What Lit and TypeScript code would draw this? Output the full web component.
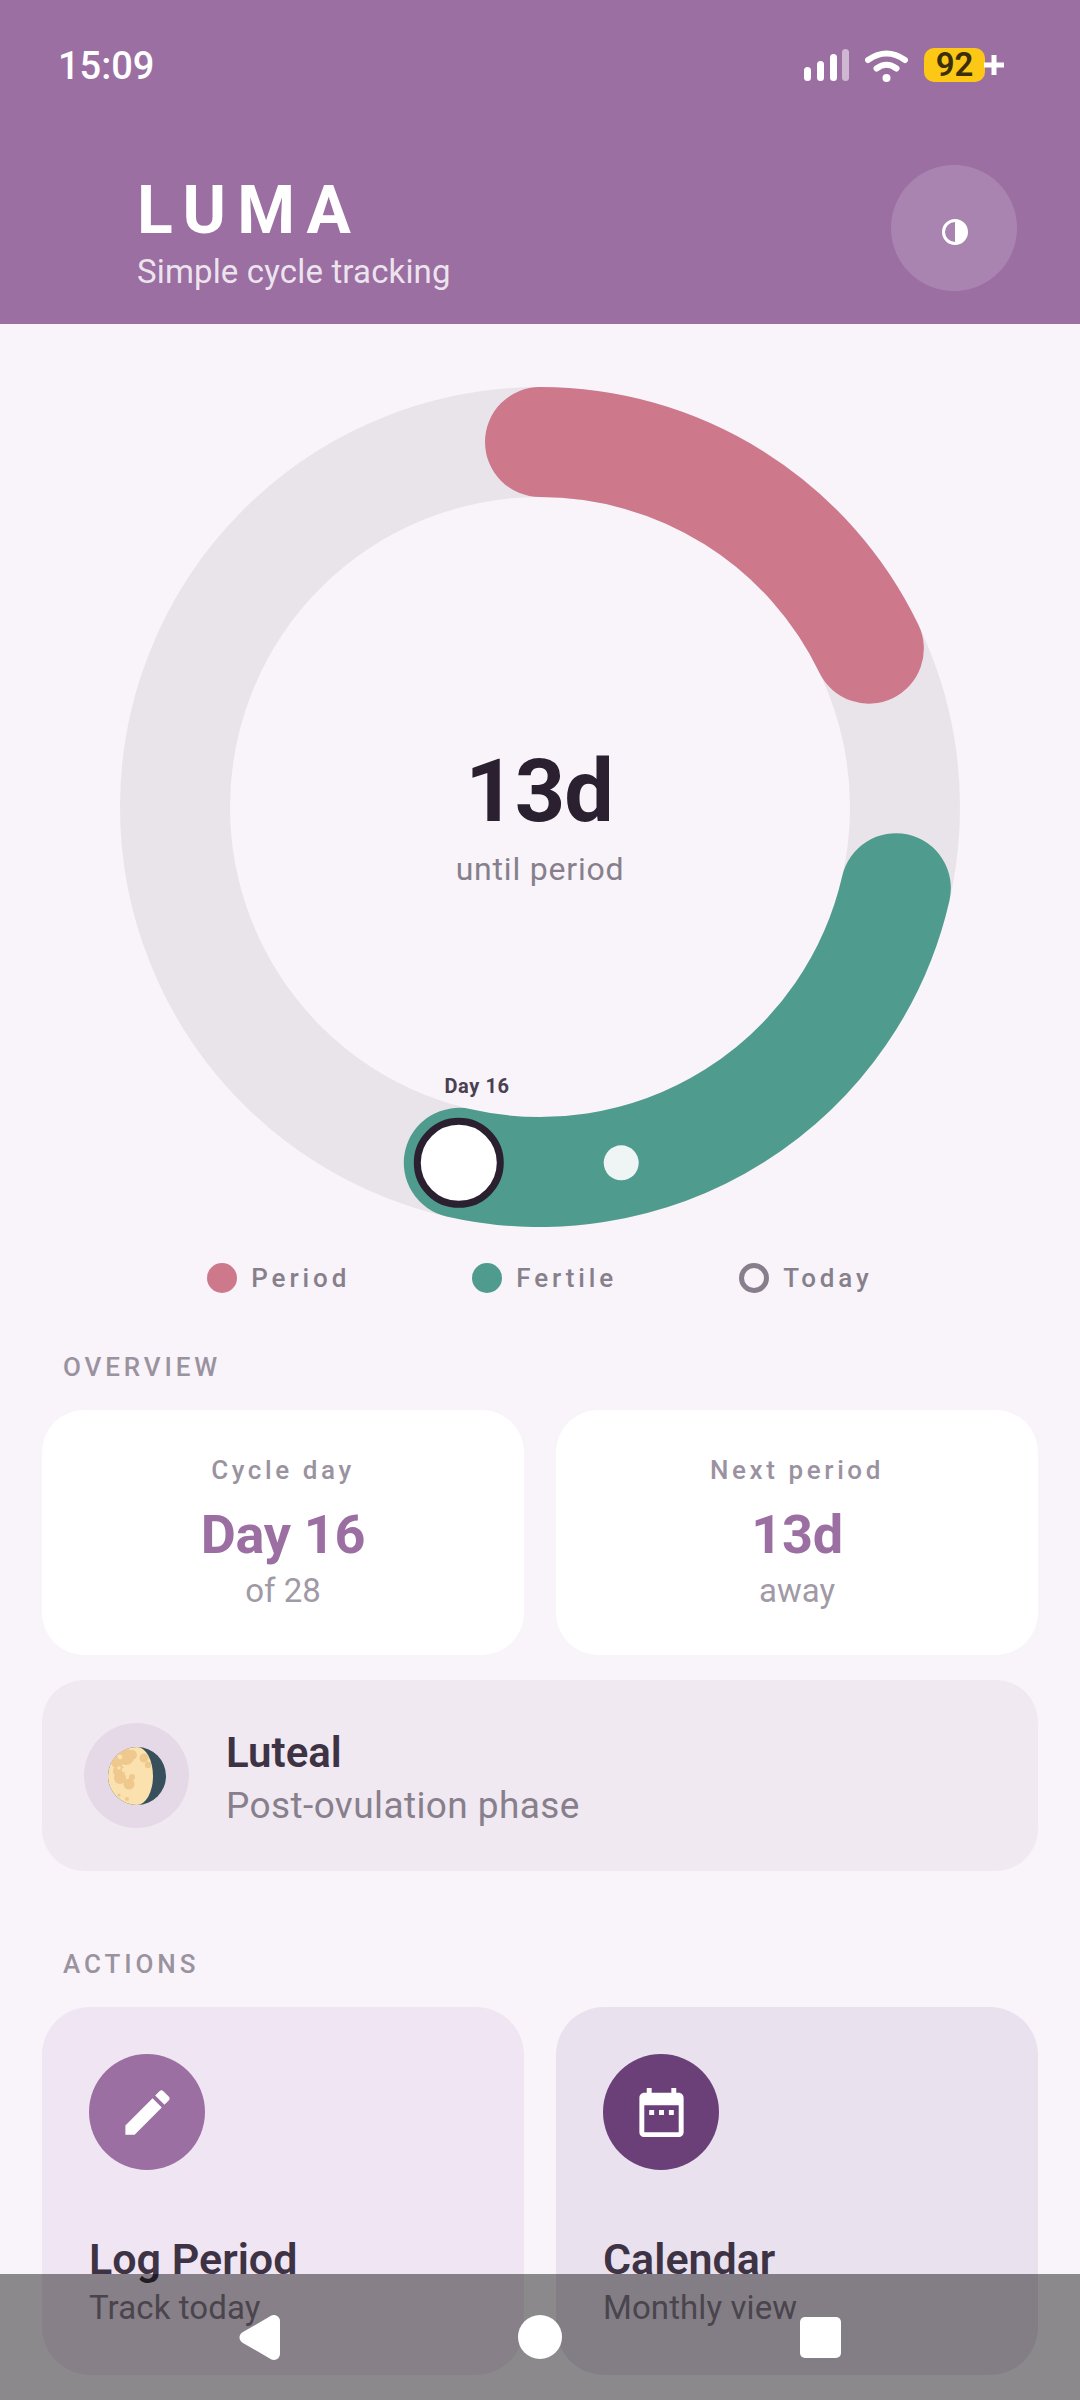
import { LitElement, html, css, svg } from "lit";
import { customElement } from "lit/decorators.js";

const C = 420;
const R = 365;
const pt = (day: number) => {
  const a = (day / 28) * 2 * Math.PI;
  return { x: C + R * Math.sin(a), y: C - R * Math.cos(a) };
};
const arc = (from: number, to: number) => {
  const s = pt(from);
  const e = pt(to);
  const large = to - from > 14 ? 1 : 0;
  return `M${s.x} ${s.y}A${R} ${R} 0 ${large} 1 ${e.x} ${e.y}`;
};

@customElement("app-root")
export class AppRoot extends LitElement {
  static styles = css`
    :host {
      display: block;
      width: 1080px;
      height: 2400px;
      position: relative;
      overflow: hidden;
      background: #f8f4fa;
      font-family: Roboto, "Liberation Sans", sans-serif;
      color: #2a2030;
    }
    .header { background: #9c6fa3; height: 324px; color: #fff; }
    .status {
      height: 130px;
      display: flex;
      align-items: center;
      justify-content: space-between;
      padding: 0 76px 0 58px;
    }
    .time { font-size: 38px; font-weight: 500; line-height: 40px; margin-top: 1px; }
    .status-icons { display: flex; align-items: center; gap: 16px; }
    .battery { display: flex; align-items: center; }
    .batt-fill {
      width: 61px;
      height: 34px;
      border-radius: 10px;
      background: #fdc815;
      color: #3a2f0a;
      font-size: 33px;
      font-weight: 600;
      line-height: 34px;
      text-align: center;
    }
    .batt-plus { display: block; margin-left: -1px; }
    .brand {
      margin-top: 35px;
      height: 126px;
      padding: 0 63px 0 138px;
      display: flex;
      align-items: center;
      justify-content: space-between;
    }
    .brand-text { padding-top: 12px; }
    .title { font-size: 66px; font-weight: 700; letter-spacing: 11px; line-height: 72px; margin-left: -1px; }
    .subtitle {
      font-size: 33px;
      line-height: 42px;
      color: rgba(255, 255, 255, 0.82);
      margin: 4px 0 0 -1px;
      letter-spacing: 0.15px;
    }
    .toggle {
      width: 126px;
      height: 126px;
      border-radius: 50%;
      background: rgba(255, 255, 255, 0.15);
      display: flex;
      align-items: center;
      justify-content: center;
    }
    .toggle svg { margin: 7px 0 0 1px; }
    .chart { position: relative; width: 840px; height: 840px; margin: 63px auto 0; }
    .chart svg { display: block; }
    .day-label { font-size: 20px; font-weight: 700; fill: #4a4050; text-anchor: middle; letter-spacing: 0.6px; }
    .center {
      position: absolute;
      inset: 0;
      display: flex;
      flex-direction: column;
      align-items: center;
      justify-content: center;
      padding-top: 16px;
      box-sizing: border-box;
    }
    .big { font-size: 88px; font-weight: 700; line-height: 100px; letter-spacing: -1px; margin-left: -2px; }
    .until { font-size: 32px; line-height: 40px; color: #87808c; letter-spacing: 0.8px; margin-top: 8px; }
    .legend {
      margin-top: 36px;
      height: 30px;
      display: flex;
      justify-content: center;
      gap: 122px;
    }
    .legend-item {
      display: flex;
      align-items: center;
      gap: 14px;
      font-size: 26px;
      font-weight: 500;
      letter-spacing: 3.9px;
      color: #87808c;
      line-height: 30px;
    }
    .dot { width: 30px; height: 30px; border-radius: 50%; box-sizing: border-box; }
    .dot.period { background: #ce788c; }
    .dot.fertile { background: #4f9c8f; }
    .dot.today { border: 5px solid #87808c; }
    .section { padding: 0 42px; }
    .label {
      font-size: 26px;
      font-weight: 500;
      line-height: 30px;
      letter-spacing: 3.9px;
      color: #9a939f;
      padding-left: 21px;
    }
    .label.overview { margin: 59px 0 28px; }
    .label.actions { margin: 78px 0 28px; }
    .grid { display: grid; grid-template-columns: 482px 482px; gap: 32px; }
    .stat {
      height: 245px;
      background: #fff;
      border-radius: 42px;
      display: flex;
      flex-direction: column;
      align-items: center;
      justify-content: center;
    }
    .stat-label { font-size: 26px; font-weight: 500; line-height: 32px; letter-spacing: 3.6px; color: #9a939f; }
    .stat-value { font-size: 54px; font-weight: 700; line-height: 62px; color: #9c6fa3; margin-top: 18px; letter-spacing: -0.3px; }
    .stat-sub { font-size: 33px; line-height: 40px; color: #a19aa6; margin-top: 5px; }
    .phase {
      margin-top: 25px;
      height: 191px;
      border-radius: 42px;
      background: #f1e9f2;
      display: flex;
      align-items: center;
      gap: 37px;
      padding: 0 42px;
    }
    .moon {
      width: 105px;
      height: 105px;
      border-radius: 50%;
      background: #e5d9e8;
      display: flex;
      align-items: center;
      justify-content: center;
    }
    .phase-text { padding-top: 4px; }
    .phase-name { font-size: 42px; font-weight: 600; line-height: 50px; color: #3e3345; }
    .phase-sub { font-size: 37px; line-height: 44px; color: #87808c; margin-top: 6px; letter-spacing: 0.4px; }
    .action { height: 368px; border-radius: 48px; padding: 47px; box-sizing: border-box; }
    .action.log { background: #f0e5f2; }
    .action.cal { background: #e9e1ee; }
    .action-icon {
      width: 116px;
      height: 116px;
      border-radius: 50%;
      display: flex;
      align-items: center;
      justify-content: center;
    }
    .log .action-icon { background: #9c6fa3; }
    .cal .action-icon { background: #6b3f78; }
    .action-name { font-size: 43px; font-weight: 600; line-height: 50px; color: #3e3345; margin-top: 64px; }
    .action-sub { font-size: 33px; line-height: 40px; color: #857a8a; margin-top: 4px; letter-spacing: 0.1px; }
    .nav {
      position: absolute;
      left: 0;
      right: 0;
      bottom: 0;
      height: 126px;
      background: rgba(0, 0, 0, 0.44);
      display: flex;
      align-items: center;
      justify-content: center;
      gap: 238px;
    }
    .nav-circle { width: 44px; height: 44px; border-radius: 50%; background: #fff; }
    .nav-square { width: 41px; height: 41px; border-radius: 5px; background: #fff; }
  `;

  render() {
    const today = pt(15);
    const ov = pt(13);
    return html`
      <div class="header">
        <div class="status">
          <span class="time">15:09</span>
          <div class="status-icons">
            <svg width="45" height="32" viewBox="0 0 45 32" fill="#fff">
              <rect x="0" y="18" width="7" height="14" rx="3.5" />
              <rect x="13" y="12" width="7" height="20" rx="3.5" />
              <rect x="26" y="5" width="7" height="27" rx="3.5" />
              <rect x="38" y="0" width="7" height="32" rx="3.5" opacity="0.5" />
            </svg>
            <svg width="43" height="33" viewBox="0 0 43 33" fill="none" stroke="#fff" stroke-width="6" stroke-linecap="round">
              <path d="M3 11Q21.5 -2 40 11" />
              <path d="M11.5 19.5Q21.5 12 31.5 19.5" />
              <circle cx="21.5" cy="29" r="4" fill="#fff" stroke="none" />
            </svg>
            <div class="battery">
              <div class="batt-fill">92</div>
              <svg class="batt-plus" width="20" height="20" viewBox="0 0 20 20" stroke="#fff" stroke-width="5">
                <path d="M0 10H20M10 0V20" />
              </svg>
            </div>
          </div>
        </div>
        <div class="brand">
          <div class="brand-text">
            <div class="title">LUMA</div>
            <div class="subtitle">Simple cycle tracking</div>
          </div>
          <div class="toggle">
            <svg width="26" height="26" viewBox="0 0 26 26">
              <circle cx="13" cy="13" r="11.5" fill="none" stroke="#fff" stroke-width="3" />
              <path d="M13 1.5A11.5 11.5 0 0 1 13 24.5Z" fill="#fff" />
            </svg>
          </div>
        </div>
      </div>

      <div class="chart">
        <svg width="840" height="840" viewBox="0 0 840 840" fill="none">
          <circle cx=${C} cy=${C} r=${R} stroke="#e8e4ea" stroke-width="110" />
          <path d=${arc(0, 5)} stroke="#ce788c" stroke-width="110" stroke-linecap="round" />
          <path d=${arc(8, 15)} stroke="#4f9c8f" stroke-width="110" stroke-linecap="round" />
          <circle cx=${ov.x} cy=${ov.y} r="17.5" fill="#fff" fill-opacity="0.9" />
          <circle cx=${today.x} cy=${today.y} r="41.5" fill="#fff" stroke="#2a2030" stroke-width="7" />
          ${svg`<text class="day-label" x="357" y="706">Day 16</text>`}
        </svg>
        <div class="center">
          <div class="big">13d</div>
          <div class="until">until period</div>
        </div>
      </div>

      <div class="legend">
        <div class="legend-item"><span class="dot period"></span>Period</div>
        <div class="legend-item"><span class="dot fertile"></span>Fertile</div>
        <div class="legend-item"><span class="dot today"></span>Today</div>
      </div>

      <div class="section">
        <div class="label overview">OVERVIEW</div>
        <div class="grid">
          <div class="stat">
            <div class="stat-label">Cycle day</div>
            <div class="stat-value">Day 16</div>
            <div class="stat-sub">of 28</div>
          </div>
          <div class="stat">
            <div class="stat-label">Next period</div>
            <div class="stat-value">13d</div>
            <div class="stat-sub">away</div>
          </div>
        </div>
        <div class="phase">
          <div class="moon">
            <svg width="58" height="58" viewBox="0 0 58 58">
              <defs><clipPath id="m"><circle cx="29" cy="29" r="29" /></clipPath></defs>
              <circle cx="29" cy="29" r="29" fill="#37505c" />
              <path d="M29 0A16 29 0 0 1 29 58A29 29 0 0 1 29 0Z" fill="#fae1ae" />
              <g clip-path="url(#m)" fill="#efc88e">
                <circle cx="18" cy="10" r="8" />
                <circle cx="9" cy="15" r="6" />
                <circle cx="24" cy="8" r="5" />
                <circle cx="11" cy="24" r="6" />
                <circle cx="12" cy="31" r="6" />
                <circle cx="21" cy="37" r="5.5" />
                <circle cx="24" cy="30" r="3" />
                <circle cx="36" cy="11" r="4.5" />
                <circle cx="40" cy="18" r="3.2" />
                <circle cx="19" cy="52" r="2" />
                <circle cx="11" cy="48" r="1.6" />
              </g>
              <g fill="#fae1ae">
                <circle cx="11" cy="21" r="1.8" />
                <circle cx="16" cy="23" r="2.2" />
                <circle cx="12" cy="10" r="2.4" />
              </g>
            </svg>
          </div>
          <div class="phase-text">
            <div class="phase-name">Luteal</div>
            <div class="phase-sub">Post-ovulation phase</div>
          </div>
        </div>
        <div class="label actions">ACTIONS</div>
        <div class="grid">
          <div class="action log">
            <div class="action-icon">
              <svg width="59" height="59" viewBox="0 0 24 24" fill="#fff">
                <path d="M3 17.25V21h3.75L17.81 9.94l-3.75-3.75L3 17.25zM20.71 7.04c.39-.39.39-1.02 0-1.41l-2.34-2.34c-.39-.39-1.02-.39-1.41 0l-1.83 1.83 3.75 3.75 1.83-1.83z" />
              </svg>
            </div>
            <div class="action-name">Log Period</div>
            <div class="action-sub">Track today</div>
          </div>
          <div class="action cal">
            <div class="action-icon">
              <svg width="59" height="59" viewBox="0 0 24 24" fill="#fff">
                <path d="M9 11H7v2h2v-2zm4 0h-2v2h2v-2zm4 0h-2v2h2v-2zm2-7h-1V2h-2v2H8V2H6v2H5c-1.11 0-1.99.9-1.99 2L3 20c0 1.1.89 2 2 2h14c1.1 0 2-.9 2-2V6c0-1.1-.9-2-2-2zm0 16H5V9h14v11z" />
              </svg>
            </div>
            <div class="action-name">Calendar</div>
            <div class="action-sub">Monthly view</div>
          </div>
        </div>
      </div>

      <div class="nav">
        <svg width="41" height="45" viewBox="0 0 41 45">
          <path d="M6.5 22.5L35 6V39Z" fill="#fff" stroke="#fff" stroke-width="12" stroke-linejoin="round" />
        </svg>
        <div class="nav-circle"></div>
        <div class="nav-square"></div>
      </div>
    `;
  }
}
